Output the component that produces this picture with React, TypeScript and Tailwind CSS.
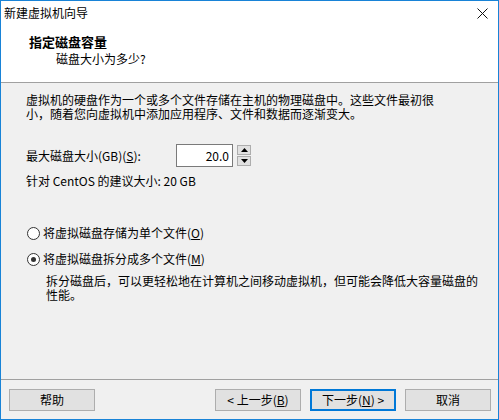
import React from 'react';

const font = { fontFamily: '"Noto Sans CJK SC", "Liberation Sans", sans-serif' };

function Btn({ children, primary }: { children: React.ReactNode; primary?: boolean }) {
  return (
    <button
      className={
        primary
          ? 'w-[86px] h-[22px] bg-[#e1e1e1] border-2 border-[#0078d7] text-[12px] leading-none text-black flex items-center justify-center'
          : 'w-[86px] h-[22px] bg-[#e1e1e1] border border-[#adadad] text-[12px] leading-none text-black flex items-center justify-center'
      }
    >
      {children}
    </button>
  );
}

function Radio({ checked, children }: { checked?: boolean; children: React.ReactNode }) {
  return (
    <div className="flex items-center h-[16px]">
      <span className="w-[13px] h-[13px] rounded-full border border-[#333] bg-white flex items-center justify-center">
        {checked && <span className="w-[5px] h-[5px] rounded-full bg-[#333]" />}
      </span>
      <span className="ml-[3px] text-[12px] leading-[16px]">{children}</span>
    </div>
  );
}

export default function App() {
  return (
    <div style={font} className="w-[499px] h-[420px] border border-[#1883d7] bg-[#f0f0f0] flex flex-col text-black overflow-hidden">
      {/* title + header */}
      <div className="h-[81px] bg-white shrink-0">
        <div className="h-[23px] flex items-center justify-between pl-[3px] pr-[10px]">
          <span className="text-[12px] leading-none">新建虚拟机向导</span>
          <svg width="11" height="11" viewBox="0 0 11 11" className="mt-[1px]">
            <path d="M0.5 0.5 L10.5 10.5 M10.5 0.5 L0.5 10.5" stroke="#111" strokeWidth="1" fill="none" />
          </svg>
        </div>
        <div className="pl-[28px] pt-[10px] text-[13px] font-bold leading-[16px]">指定磁盘容量</div>
        <div className="pl-[55px] pt-[1px] text-[12px] leading-[16px]">磁盘大小为多少?</div>
      </div>
      <div className="h-px bg-[#a0a0a0] shrink-0" />

      {/* body */}
      <div className="h-[296px] shrink-0 pl-[25px] pt-[10px] text-[12px]">
        <p className="leading-[14px] whitespace-nowrap">
          虚拟机的硬盘作为一个或多个文件存储在主机的物理磁盘中。这些文件最初很
          <br />
          小，随着您向虚拟机中添加应用程序、文件和数据而逐渐变大。
        </p>

        <div className="mt-[23px] h-[23px] flex items-center">
          <span className="w-[150px] leading-none">
            最大磁盘大小(GB)(<span className="underline">S</span>):
          </span>
          <div className="w-[57px] h-[23px] border border-[#7a7a7a] bg-white flex items-center justify-end pr-[3px] leading-none">
            20.0
          </div>
          <div className="ml-[4px] flex flex-col gap-[1px]">
            <div className="w-[14px] h-[10px] bg-[#e1e1e1] border border-[#adadad] flex items-center justify-center">
              <svg width="7" height="4" viewBox="0 0 7 4"><path d="M3.5 0 L7 4 L0 4 Z" fill="#000" /></svg>
            </div>
            <div className="w-[14px] h-[10px] bg-[#e1e1e1] border border-[#adadad] flex items-center justify-center">
              <svg width="7" height="4" viewBox="0 0 7 4"><path d="M0 0 L7 0 L3.5 4 Z" fill="#000" /></svg>
            </div>
          </div>
        </div>

        <p className="mt-[7px] leading-[14px]">针对 CentOS 的建议大小: 20 GB</p>

        <div className="mt-[37px] pl-[1px]">
          <Radio>
            将虚拟磁盘存储为单个文件(<span className="underline">O</span>)
          </Radio>
        </div>
        <div className="mt-[10px] pl-[1px]">
          <Radio checked>
            将虚拟磁盘拆分成多个文件(<span className="underline">M</span>)
          </Radio>
        </div>
        <p className="mt-[7px] pl-[20px] leading-[14px] whitespace-nowrap">
          拆分磁盘后，可以更轻松地在计算机之间移动虚拟机，但可能会降低大容量磁盘的
          <br />
          性能。
        </p>
      </div>
      <div className="h-px bg-[#a0a0a0] shrink-0" />

      {/* footer */}
      <div className="flex-1 flex items-start pt-[9px] pl-[8px] pr-[7px]">
        <Btn>帮助</Btn>
        <div className="flex-1" />
        <div className="flex gap-[9px]">
          <Btn>
            &lt; 上一步(<span className="underline">B</span>)
          </Btn>
          <Btn primary>
            下一步(<span className="underline">N</span>) &gt;
          </Btn>
          <Btn>取消</Btn>
        </div>
      </div>
    </div>
  );
}
